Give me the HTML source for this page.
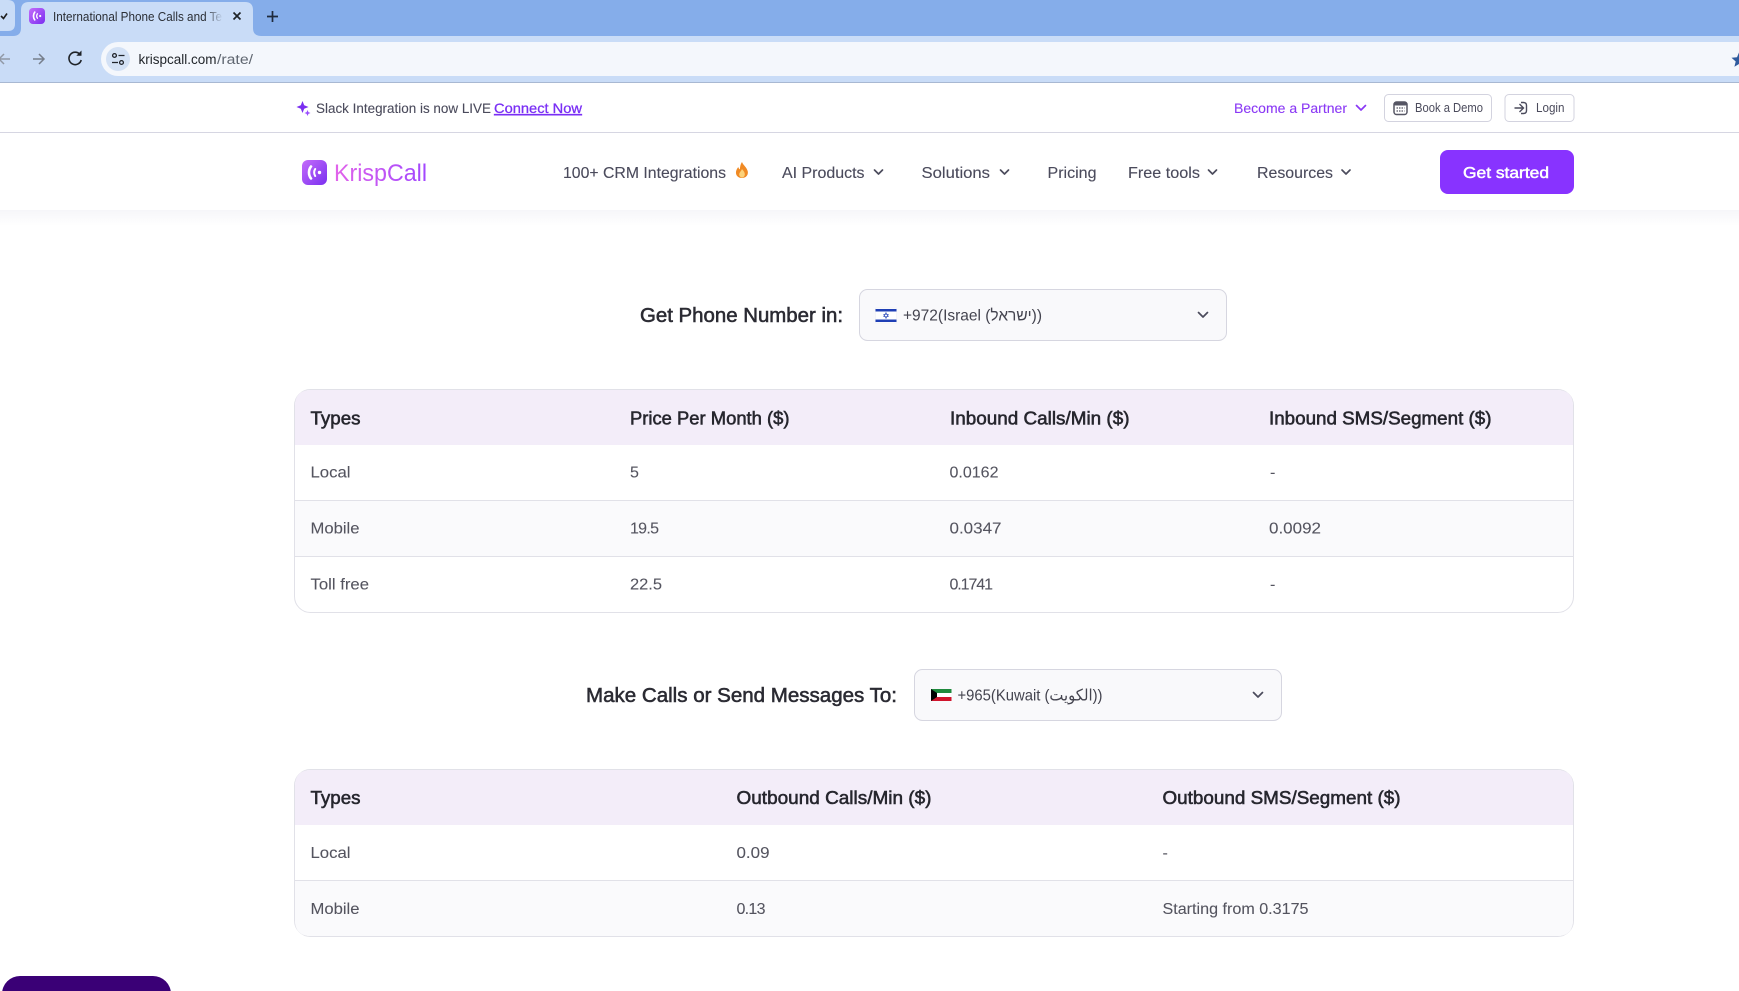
<!DOCTYPE html>
<html lang="en"><head><meta charset="utf-8"><title>International Phone Calls and Text Rates</title>
<style>
html,body{margin:0;padding:0;background:#fff;width:1739px;height:991px;overflow:hidden}
svg{display:block;position:absolute;left:0;top:0}
text{font-family:"Liberation Sans","DejaVu Sans",sans-serif;white-space:pre}
.nav{font-size:16px;fill:#4b4b5c;stroke:#4b4b5c;stroke-width:.12px}
.h{font-size:18px;fill:#26262e;stroke:#26262e;stroke-width:.55px}
.r{font-size:16px;fill:#54545f;stroke:#54545f;stroke-width:.08px}
.lb{font-size:20px;fill:#2b2b33;stroke:#2b2b33;stroke-width:.55px}
.dd{font-size:16px;fill:#44444f}
.top{font-size:14px;fill:#4b4b5c;stroke:#4b4b5c;stroke-width:.1px}
.ch{fill:none;stroke:#4b4b5c;stroke-width:1.7;stroke-linecap:round;stroke-linejoin:round}
</style></head><body>
<svg width="1739" height="991" viewBox="0 0 1739 991" xmlns="http://www.w3.org/2000/svg">
<defs>
<linearGradient id="lg" x1="0" y1="0" x2="1" y2="1"><stop offset="0" stop-color="#c46cfa"/><stop offset="1" stop-color="#7a2ff0"/></linearGradient>
<linearGradient id="tg" x1="0" y1="0" x2="1" y2="0"><stop offset="0" stop-color="#e264ea"/><stop offset="1" stop-color="#a147ff"/></linearGradient>
<linearGradient id="fade" x1="0" y1="0" x2="1" y2="0"><stop offset="0" stop-color="#c9dcf7" stop-opacity="0"/><stop offset="1" stop-color="#c9dcf7"/></linearGradient>
<linearGradient id="sh" x1="0" y1="0" x2="0" y2="1"><stop offset="0" stop-color="#f6f6f9"/><stop offset="1" stop-color="#fff"/></linearGradient>
<symbol id="logo" viewBox="0 0 25 25">
<rect width="25" height="25" rx="6" fill="url(#lg)"/>
<path d="M9 6.5C6.3 10 6.3 15 9 18.500" fill="none" stroke="#fff" stroke-width="2.600" stroke-linecap="round"/>
<path d="M13.200 9C11.800 11 11.800 14 13.200 16" fill="none" stroke="#fff" stroke-width="2" stroke-linecap="round"/>
<circle cx="17.500" cy="12.500" r="1.700" fill="#fff"/>
</symbol>
</defs>

<!-- browser chrome -->
<rect width="1739" height="36" fill="#85adea"/>
<rect y="36" width="1739" height="46" fill="#c9dcf7"/>
<rect y="82" width="1739" height="1" fill="#a8b8d2"/>
<path d="M0 0H8Q15 0 15 7V24Q15 31 8 31H0Z" fill="#c9dcf7"/>
<path d="M1 16l2.500 2.500L7 13.500" fill="none" stroke="#1f1f1f" stroke-width="1.600"/>
<path d="M13 36Q21 36 21 28V10Q21 2 29 2H245Q253 2 253 10V28Q253 36 261 36Z" fill="#c9dcf7"/>
<use href="#logo" x="29" y="8" width="16" height="16"/>
<text x="53" y="21" font-size="12.500" fill="#2b2f36" textLength="169" lengthAdjust="spacingAndGlyphs">International Phone Calls and Te</text>
<rect x="205" y="8" width="18" height="18" fill="url(#fade)"/>
<path d="M233.500 12.500l7 7M240.500 12.500l-7 7" stroke="#1f2328" stroke-width="1.700" fill="none"/>
<path d="M272.500 11v11M267 16.500h11" stroke="#1f2a3d" stroke-width="1.700" fill="none"/>

<path d="M10 59H-1M4 54l-5 5 5 5" fill="none" stroke="#9098a5" stroke-width="1.500"/>
<path d="M33 59h11M39 54l5 5-5 5" fill="none" stroke="#767e8b" stroke-width="1.500"/>
<path d="M80 54.500A6.200 6.200 0 1 0 81.200 60" fill="none" stroke="#1f2328" stroke-width="1.600"/>
<path d="M81.500 50.500v5.200h-5.200z" fill="#1f2328"/>
<path d="M118 42H1739V76H118A17 17 0 0 1 118 42Z" fill="#f4f7fc"/>
<circle cx="118" cy="59" r="12" fill="#d3e1f5"/>
<circle cx="114.500" cy="55.500" r="1.900" fill="none" stroke="#20242b" stroke-width="1.300"/>
<path d="M118.500 55.500h6M112 62.500h6" stroke="#20242b" stroke-width="1.300"/>
<circle cx="121.500" cy="62.500" r="1.900" fill="none" stroke="#20242b" stroke-width="1.300"/>
<text x="138.500" y="64" font-size="13.500" fill="#1f2328" textLength="78" lengthAdjust="spacingAndGlyphs">krispcall.com</text>
<text x="217" y="64" font-size="13.500" fill="#5f6670" textLength="36" lengthAdjust="spacingAndGlyphs">/rate/</text>
<path d="M1739 52.500l-2 4.800-5.500.5 4.200 3.700-1.300 5.300 4.600-2.800z" fill="#2f5b9e"/>

<!-- top strip -->
<path d="M302.500 101l1.700 4.300 4.300 1.700-4.300 1.700-1.700 4.300-1.700-4.300-4.300-1.700 4.300-1.700z" fill="#7a2ff0"/>
<path d="M307.500 110l.9 2.100 2.100.9-2.100.9-.9 2.100-.9-2.100-2.100-.9 2.100-.9z" fill="#9a4dff"/>
<text x="316" y="113" class="top" textLength="175" lengthAdjust="spacingAndGlyphs">Slack Integration is now LIVE</text>
<text x="494" y="113" font-size="14" fill="#7a2ff5" stroke="#7a2ff5" stroke-width=".3" text-decoration="underline" textLength="88" lengthAdjust="spacingAndGlyphs">Connect Now</text>
<text x="1234" y="113" font-size="14" fill="#8a38f5" stroke="#8a38f5" stroke-width=".1" textLength="113" lengthAdjust="spacingAndGlyphs">Become a Partner</text>
<path d="M1356.500 105.500l4.500 4.500 4.500-4.500" fill="none" stroke="#8a38f5" stroke-width="1.700" stroke-linecap="round" stroke-linejoin="round"/>
<rect x="1384.500" y="94.500" width="107" height="27" rx="4" fill="#fff" stroke="#d3d3df"/>
<rect x="1394" y="102" width="13" height="12.500" rx="2.500" fill="none" stroke="#565664" stroke-width="1.500"/>
<rect x="1394" y="102" width="13" height="3.500" rx="1.500" fill="#565664"/>
<path d="M1396.500 108h8M1396.500 111h8" stroke="#565664" stroke-width="1.300" stroke-dasharray="1.500 1"/>
<text x="1415" y="112" font-size="12.500" fill="#4b4b5c" textLength="68" lengthAdjust="spacingAndGlyphs">Book a Demo</text>
<rect x="1505" y="94.500" width="69" height="27" rx="4" fill="#fff" stroke="#d3d3df"/>
<path d="M1514.500 108h8M1519.500 104l4 4-4 4" fill="none" stroke="#4b4b5c" stroke-width="1.400"/>
<path d="M1521 102.500h2.500q3 0 3 3v5q0 3-3 3H1521" fill="none" stroke="#4b4b5c" stroke-width="1.400"/>
<text x="1536" y="112" font-size="12.500" fill="#4b4b5c" textLength="28.500" lengthAdjust="spacingAndGlyphs">Login</text>
<rect y="132" width="1739" height="1" fill="#d6d6e2"/>

<!-- nav -->
<rect y="210" width="1739" height="16" fill="url(#sh)"/>
<use href="#logo" x="302" y="160" width="25" height="25"/>
<text x="334" y="181" font-size="24" fill="url(#tg)" textLength="93" lengthAdjust="spacingAndGlyphs">KrispCall</text>
<text x="563" y="178" class="nav" textLength="163" lengthAdjust="spacingAndGlyphs">100+ CRM Integrations</text>
<path d="M742 162c1 3 5 5.500 5.800 9.500.6 3.800-2 6.500-5.800 6.500s-6.500-2.700-6-6.300c.3-2 1.300-3.300 2.300-4.700.3 1.200.8 2 1.600 2.400.2-2.800.5-5 2.100-7.400z" fill="#f08a24"/>
<path d="M742 169c1.200 1.700 2.800 3 2.800 5.200 0 1.900-1.300 3.300-2.800 3.300s-2.900-1.400-2.800-3.200c.1-2 2-3 2.800-5.300z" fill="#fcd27a"/>
<text x="782" y="178" class="nav" textLength="82.500" lengthAdjust="spacingAndGlyphs">AI Products</text>
<path class="ch" d="M874.500 170l4 4 4-4"/>
<text x="921.500" y="178" class="nav" textLength="68.500" lengthAdjust="spacingAndGlyphs">Solutions</text>
<path class="ch" d="M1000.500 170l4 4 4-4"/>
<text x="1047.500" y="178" class="nav" textLength="49" lengthAdjust="spacingAndGlyphs">Pricing</text>
<text x="1128" y="178" class="nav" textLength="72" lengthAdjust="spacingAndGlyphs">Free tools</text>
<path class="ch" d="M1208.500 170l4 4 4-4"/>
<text x="1257" y="178" class="nav" textLength="76" lengthAdjust="spacingAndGlyphs">Resources</text>
<path class="ch" d="M1342 170l4 4 4-4"/>
<rect x="1440" y="150" width="134" height="44" rx="8" fill="#8833ff"/>
<text x="1463" y="178" font-size="16" fill="#fff" stroke="#fff" stroke-width=".5" textLength="86" lengthAdjust="spacingAndGlyphs">Get started</text>

<!-- selector 1 -->
<text x="640" y="322" class="lb" textLength="203" lengthAdjust="spacingAndGlyphs">Get Phone Number in:</text>
<rect x="859.500" y="289.500" width="367" height="51" rx="8" fill="#f9f9fb" stroke="#d6d6e0"/>
<rect x="875.500" y="308" width="21" height="15" fill="#fff" stroke="#ececf2" stroke-width=".5"/>
<rect x="875.500" y="309" width="21" height="2.500" fill="#1f3fb5"/>
<rect x="875.500" y="319.500" width="21" height="2.500" fill="#1f3fb5"/>
<path d="M886 312.600l2.300 3.900h-4.600zM886 318.400l-2.300-3.900h4.600z" fill="none" stroke="#1f3fb5" stroke-width=".6"/>
<text x="903" y="320.500" class="dd" textLength="139" lengthAdjust="spacingAndGlyphs">+972(Israel (ישראל))</text>
<path class="ch" d="M1198.500 312.500l4.500 4.500 4.500-4.500" stroke="#3d3d55" stroke-width="1.500"/>

<!-- table 1 -->
<rect x="294.500" y="389.500" width="1279" height="223" rx="16" fill="#fff" stroke="#e1e1e8"/>
<path d="M311 390H1557Q1573 390 1573 406V445H295V406Q295 390 311 390Z" fill="#f3edf9"/>
<rect x="295" y="501" width="1278" height="55" fill="#fafafc"/>
<rect x="295" y="500" width="1278" height="1" fill="#e1e1e8"/>
<rect x="295" y="556" width="1278" height="1" fill="#e1e1e8"/>
<text x="310.500" y="424.500" class="h" textLength="50" lengthAdjust="spacingAndGlyphs">Types</text>
<text x="630" y="424.500" class="h" textLength="159.500" lengthAdjust="spacingAndGlyphs">Price Per Month ($)</text>
<text x="950" y="424.500" class="h" textLength="179.500" lengthAdjust="spacingAndGlyphs">Inbound Calls/Min ($)</text>
<text x="1269" y="424.500" class="h" textLength="222.500" lengthAdjust="spacingAndGlyphs">Inbound SMS/Segment ($)</text>
<text x="310.500" y="477.500" class="r" textLength="40" lengthAdjust="spacingAndGlyphs">Local</text>
<text x="630" y="477.500" class="r">5</text>
<text x="949.500" y="477.500" class="r" textLength="49" lengthAdjust="spacing">0.0162</text>
<text x="1270" y="477.500" class="r">-</text>
<text x="310.500" y="533.500" class="r" textLength="49" lengthAdjust="spacingAndGlyphs">Mobile</text>
<text x="630" y="533.500" class="r" textLength="29" lengthAdjust="spacing">19.5</text>
<text x="949.500" y="533.500" class="r" textLength="52" lengthAdjust="spacingAndGlyphs">0.0347</text>
<text x="1269" y="533.500" class="r" textLength="52" lengthAdjust="spacingAndGlyphs">0.0092</text>
<text x="310.500" y="589.500" class="r" textLength="58.500" lengthAdjust="spacingAndGlyphs">Toll free</text>
<text x="630" y="589.500" class="r" textLength="32" lengthAdjust="spacingAndGlyphs">22.5</text>
<text x="949.500" y="589.500" class="r" textLength="43.500" lengthAdjust="spacing">0.1741</text>
<text x="1270" y="589.500" class="r">-</text>

<!-- selector 2 -->
<text x="586" y="702" class="lb" textLength="311" lengthAdjust="spacingAndGlyphs">Make Calls or Send Messages To:</text>
<rect x="914.500" y="669.500" width="367" height="51" rx="8" fill="#f9f9fb" stroke="#d6d6e0"/>
<rect x="931" y="689" width="20.500" height="4" fill="#1f8a3d"/>
<rect x="931" y="693" width="20.500" height="4" fill="#fff"/>
<rect x="931" y="697" width="20.500" height="4" fill="#d0142c"/>
<path d="M931 689l6 4v4l-6 4z" fill="#000"/>
<text x="957.500" y="700.500" class="dd" textLength="145" lengthAdjust="spacingAndGlyphs">+965(Kuwait (الكويت))</text>
<path class="ch" d="M1253.500 692.500l4.500 4.500 4.500-4.500" stroke="#3d3d55" stroke-width="1.500"/>

<!-- table 2 -->
<rect x="294.500" y="769.500" width="1279" height="167" rx="16" fill="#fff" stroke="#e1e1e8"/>
<path d="M311 770H1557Q1573 770 1573 786V825H295V786Q295 770 311 770Z" fill="#f3edf9"/>
<path d="M295 881H1573V920Q1573 936 1557 936H311Q295 936 295 920Z" fill="#fafafc"/>
<rect x="295" y="880" width="1278" height="1" fill="#e1e1e8"/>
<text x="310.500" y="804" class="h" textLength="50" lengthAdjust="spacingAndGlyphs">Types</text>
<text x="736.500" y="804" class="h" textLength="195" lengthAdjust="spacingAndGlyphs">Outbound Calls/Min ($)</text>
<text x="1162.500" y="804" class="h" textLength="238" lengthAdjust="spacingAndGlyphs">Outbound SMS/Segment ($)</text>
<text x="310.500" y="858" class="r" textLength="40" lengthAdjust="spacingAndGlyphs">Local</text>
<text x="736.500" y="858" class="r" textLength="33" lengthAdjust="spacingAndGlyphs">0.09</text>
<text x="1162.500" y="858" class="r">-</text>
<text x="310.500" y="914" class="r" textLength="49" lengthAdjust="spacingAndGlyphs">Mobile</text>
<text x="736.500" y="914" class="r" textLength="29" lengthAdjust="spacing">0.13</text>
<text x="1162.500" y="914" class="r" textLength="146" lengthAdjust="spacingAndGlyphs">Starting from 0.3175</text>

<!-- floating button -->
<rect x="2" y="976" width="169" height="50" rx="18" fill="#3a0076"/>
</svg>
</body></html>
